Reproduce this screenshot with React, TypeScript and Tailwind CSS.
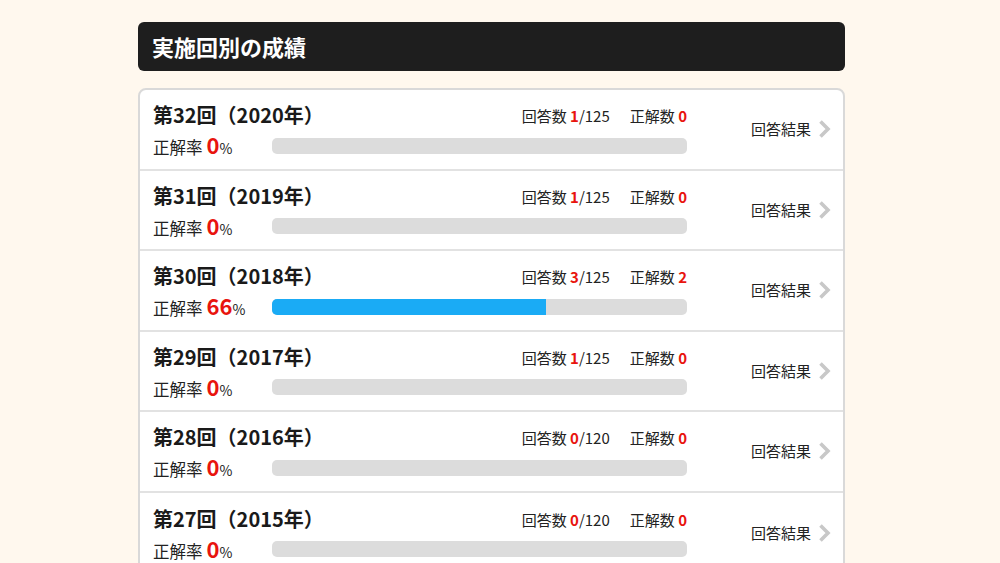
const FONT = '"Noto Sans CJK JP", "Noto Sans", sans-serif';

type Result = {
  round: number;
  year: number;
  answered: number;
  total: number;
  correct: number;
};

const RESULTS: Result[] = [
  { round: 32, year: 2020, answered: 1, total: 125, correct: 0 },
  { round: 31, year: 2019, answered: 1, total: 125, correct: 0 },
  { round: 30, year: 2018, answered: 3, total: 125, correct: 2 },
  { round: 29, year: 2017, answered: 1, total: 125, correct: 0 },
  { round: 28, year: 2016, answered: 0, total: 120, correct: 0 },
  { round: 27, year: 2015, answered: 0, total: 120, correct: 0 },
];

function Chevron() {
  return (
    <svg width="13" height="20" viewBox="0 0 13 20" fill="none">
      <path d="M2.5 2.5 L10 10 L2.5 17.5" stroke="#c8c8c8" strokeWidth="3.6" strokeLinejoin="miter" />
    </svg>
  );
}

function ResultRow({ r }: { r: Result }) {
  const rate = r.answered > 0 ? Math.floor((r.correct / r.answered) * 100) : 0;

  return (
    <div className="flex h-[80.5px] items-stretch border-b-2 border-[#e2e2e2] last:border-b-0">
      <div className="flex flex-1 flex-col justify-center pl-[13px] pt-[3px]">
        <div className="flex items-center justify-between">
          <h3 className="text-[20px] font-bold leading-[28px] text-[#1a1a1a]">
            第{r.round}回（{r.year}年）
          </h3>
          <div className="flex items-center gap-[20px] pt-[2px] text-[15px] text-[#222]">
            <span>
              回答数 <span className="font-bold text-[#e8140e]">{r.answered}</span>/{r.total}
            </span>
            <span>
              正解数 <span className="font-bold text-[#e8140e]">{r.correct}</span>
            </span>
          </div>
        </div>
        <div className="mt-[2px] flex items-center">
          <div className="flex w-[119px] items-baseline text-[#222]">
            <span className="text-[16.5px]">正解率</span>
            <span className="ml-[4px] text-[22px] font-bold leading-[26px] text-[#e8140e]">{rate}</span>
            <span className="text-[14px]">%</span>
          </div>
          <div className="h-[16px] flex-1 overflow-hidden rounded-[5px] bg-[#dcdcdc]">
            {rate > 0 && <div className="h-full bg-[#1aabf5]" style={{ width: `${rate}%` }} />}
          </div>
        </div>
      </div>
      <div className="flex w-[156px] items-center justify-end gap-[7px] pr-[12px]">
        <span className="text-[15px] text-[#222]">回答結果</span>
        <Chevron />
      </div>
    </div>
  );
}

export default function App() {
  return (
    <div className="min-h-screen bg-[#fff8ee] pt-[22px]" style={{ fontFamily: FONT }}>
      <div className="ml-[138px] w-[707px]">
        <div className="flex h-[49px] items-center rounded-[6px] bg-[#1e1e1e] px-[14px]">
          <h2 className="text-[22px] font-bold text-white">実施回別の成績</h2>
        </div>
        <div className="mt-[17px] overflow-hidden rounded-[8px] border-2 border-[#d9d9d9] bg-white">
          {RESULTS.map((r) => (
            <ResultRow key={r.round} r={r} />
          ))}
        </div>
      </div>
    </div>
  );
}
